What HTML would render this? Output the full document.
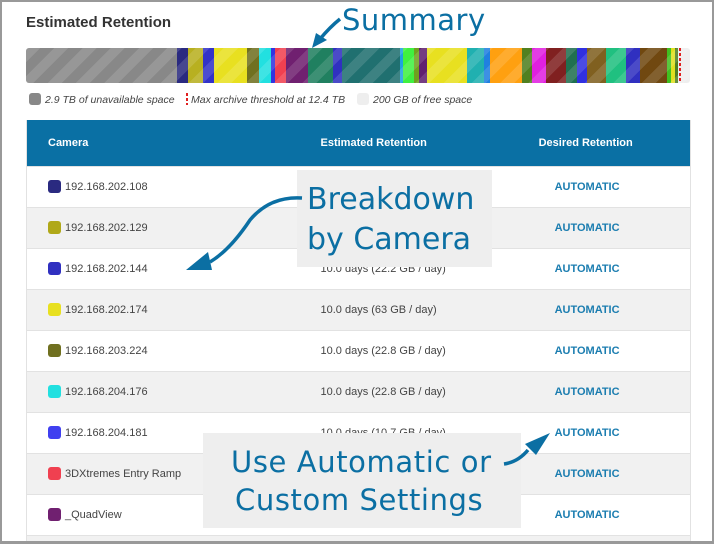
<!DOCTYPE html>
<html style="width:714px;height:544px;overflow:hidden"><head><style>
*{margin:0;padding:0;box-sizing:border-box}
body{width:714px;height:544px;overflow:hidden;background:#fff;font-family:"Liberation Sans",sans-serif;position:relative}
.frame{position:absolute;left:0;top:0;width:714px;height:544px;border:2px solid #999;border-bottom-width:3px}
.title{position:absolute;left:26px;top:14px;font-size:15px;font-weight:bold;color:#333}
.bar{position:absolute;left:26px;top:48px;width:664px;height:35px;background:#eee;border-radius:3px;overflow:hidden}
.seg{position:absolute;top:0;height:35px}
.stripes{position:absolute;inset:0;background:repeating-linear-gradient(135deg,rgba(255,255,255,0.13) 0 10px,rgba(0,0,0,0) 10px 20px)}
.legend{position:absolute;top:93px;font-size:10.5px;font-style:italic;color:#444}
.sw{display:inline-block;width:12px;height:12px;border-radius:3px;vertical-align:-2px;margin-right:4px}
.tw{position:absolute;left:26px;top:120px;width:665px;height:421px;overflow:hidden}
table{width:665px;border-collapse:collapse;font-size:11px;color:#444;border-left:1px solid #e2e2e2;border-right:1px solid #e2e2e2}
th{background:#0a70a4;color:#fff;height:46px;text-align:left;font-size:11px}
td{height:41px;border-top:1px solid #e2e2e2}
tr:nth-child(odd) td{background:#f1f1f1}
tr.last td{height:6px}
.c1{padding-left:21px;width:294px}
th.c3{padding-left:39px}
td.c3{padding-left:55px;color:#1b7db0;font-weight:bold}
.cs{display:inline-block;width:13px;height:13px;border-radius:3px;vertical-align:-3px;margin-right:4px}
.note{position:absolute;font-family:"DejaVu Sans",sans-serif;color:#0b6fa3}
.box{position:absolute;background:#eeeeee}
</style></head><body>
<div class="title">Estimated Retention</div>
<div class="note" style="left:342px;top:3px;font-size:29px;letter-spacing:0.5px">Summary</div>
<svg style="position:absolute;left:300px;top:15px" width="50" height="35"><path d="M40 4 Q30 12 20 24" stroke="#0b6fa3" stroke-width="3.5" fill="none"/><path d="M12 33 L16 18 L27 25 Z" fill="#0b6fa3"/></svg>
<div class="bar">
<div class="seg" style="left:0;width:151px;background:#888"></div>
<div class="seg" style="left:151px;width:11px;background:#2a2a80"></div>
<div class="seg" style="left:162px;width:15px;background:#b8b020"></div>
<div class="seg" style="left:177px;width:11px;background:#3333c8"></div>
<div class="seg" style="left:188px;width:33px;background:#e8e020"></div>
<div class="seg" style="left:221px;width:12px;background:#707020"></div>
<div class="seg" style="left:233px;width:12px;background:#22e0e0"></div>
<div class="seg" style="left:245px;width:4px;background:#3333e0"></div>
<div class="seg" style="left:249px;width:11px;background:#f04050"></div>
<div class="seg" style="left:260px;width:22px;background:#702070"></div>
<div class="seg" style="left:282px;width:25px;background:#208060"></div>
<div class="seg" style="left:307px;width:9px;background:#3030c0"></div>
<div class="seg" style="left:316px;width:58px;background:#207070"></div>
<div class="seg" style="left:374px;width:3px;background:#20a0e0"></div>
<div class="seg" style="left:377px;width:11px;background:#40f040"></div>
<div class="seg" style="left:388px;width:5px;background:#70a020"></div>
<div class="seg" style="left:393px;width:8px;background:#602070"></div>
<div class="seg" style="left:401px;width:40px;background:#e8e020"></div>
<div class="seg" style="left:441px;width:17px;background:#20b0b0"></div>
<div class="seg" style="left:458px;width:6px;background:#2080e0"></div>
<div class="seg" style="left:464px;width:32px;background:#ffa010"></div>
<div class="seg" style="left:496px;width:10px;background:#508020"></div>
<div class="seg" style="left:506px;width:14px;background:#e020e0"></div>
<div class="seg" style="left:520px;width:20px;background:#802020"></div>
<div class="seg" style="left:540px;width:11px;background:#207050"></div>
<div class="seg" style="left:551px;width:10px;background:#3030e0"></div>
<div class="seg" style="left:561px;width:19px;background:#806020"></div>
<div class="seg" style="left:580px;width:20px;background:#20c080"></div>
<div class="seg" style="left:600px;width:14px;background:#3030c0"></div>
<div class="seg" style="left:614px;width:27px;background:#704810"></div>
<div class="seg" style="left:641px;width:4px;background:#40c020"></div>
<div class="seg" style="left:645px;width:4px;background:#e0e020"></div>
<div class="seg" style="left:649px;width:3px;background:#508020"></div>
<div class="stripes"></div>
<div class="seg" style="left:653px;width:2px;background:repeating-linear-gradient(#e02020 0 3px,transparent 3px 5px)"></div>
</div>
<div class="legend" style="left:29px"><span class="sw" style="background:#888"></span>2.9 TB of unavailable space</div>
<div class="legend" style="left:186px"><span style="display:inline-block;width:2px;height:12px;background:repeating-linear-gradient(#e02020 0 3px,transparent 3px 5px);vertical-align:-2px;margin-right:3px"></span>Max archive threshold at 12.4 TB</div>
<div class="legend" style="left:357px"><span class="sw" style="background:#eee"></span>200 GB of free space</div>
<div class="tw"><table>
<tr><th class="c1">Camera</th><th>Estimated Retention</th><th class="c3">Desired Retention</th></tr>
<tr><td class="c1"><span class="cs" style="background:#2a2a80"></span>192.168.202.108</td><td></td><td class="c3">AUTOMATIC</td></tr>
<tr><td class="c1"><span class="cs" style="background:#b0a818"></span>192.168.202.129</td><td></td><td class="c3">AUTOMATIC</td></tr>
<tr><td class="c1"><span class="cs" style="background:#3030c0"></span>192.168.202.144</td><td>10.0 days (22.2 GB / day)</td><td class="c3">AUTOMATIC</td></tr>
<tr><td class="c1"><span class="cs" style="background:#e8e020"></span>192.168.202.174</td><td>10.0 days (63 GB / day)</td><td class="c3">AUTOMATIC</td></tr>
<tr><td class="c1"><span class="cs" style="background:#707020"></span>192.168.203.224</td><td>10.0 days (22.8 GB / day)</td><td class="c3">AUTOMATIC</td></tr>
<tr><td class="c1"><span class="cs" style="background:#22e0e0"></span>192.168.204.176</td><td>10.0 days (22.8 GB / day)</td><td class="c3">AUTOMATIC</td></tr>
<tr><td class="c1"><span class="cs" style="background:#4040f0"></span>192.168.204.181</td><td>10.0 days (10.7 GB / day)</td><td class="c3">AUTOMATIC</td></tr>
<tr><td class="c1"><span class="cs" style="background:#f04050"></span>3DXtremes Entry Ramp</td><td></td><td class="c3">AUTOMATIC</td></tr>
<tr><td class="c1"><span class="cs" style="background:#702070"></span>_QuadView</td><td></td><td class="c3">AUTOMATIC</td></tr>
<tr class="last"><td class="c1"></td><td></td><td></td></tr>
</table></div>
<div class="box" style="left:297px;top:170px;width:195px;height:97px"></div>
<div class="note" style="left:307px;top:180px;font-size:30px;line-height:40px">Breakdown<br>by Camera</div>
<svg style="position:absolute;left:180px;top:190px" width="125" height="90"><path d="M122 8 Q90 6 70 30 Q50 60 30 72" stroke="#0b6fa3" stroke-width="3.5" fill="none"/><path d="M6 80 L28 62 L32 80 Z" fill="#0b6fa3"/></svg>
<div class="box" style="left:203px;top:433px;width:318px;height:95px"></div>
<div class="note" style="left:231px;top:443px;font-size:29px;line-height:38px;letter-spacing:0.6px">Use Automatic or<br><span style="margin-left:4px">Custom Settings</span></div>
<svg style="position:absolute;left:500px;top:430px" width="60" height="40"><path d="M4 34 Q18 32 28 20" stroke="#0b6fa3" stroke-width="3.5" fill="none"/><path d="M50 3 L25 14 L36 25 Z" fill="#0b6fa3"/></svg>
<div class="frame"></div>
</body></html>
